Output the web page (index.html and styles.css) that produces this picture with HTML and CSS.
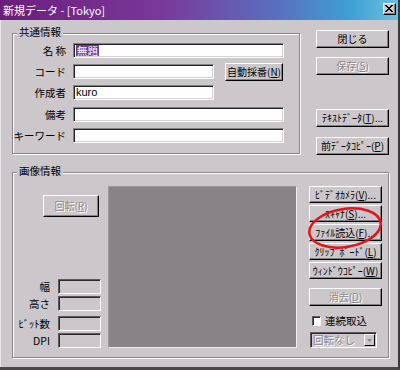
FILE: index.html
```html
<!DOCTYPE html>
<html>
    <head>
        <title>新規データ</title>
        <link rel="stylesheet" href="styles.css">
    </head>
    <body>
        <div class="window">
            <div class="titlebar">
                <span class="title">新規データ - [Tokyo]</span>
                <button class="close">
                    <svg width="9" height="8" viewBox="0 0 9 8">
                        <path d="M1 0 L8 7 M0 0 L7 7 M8 0 L1 7 M7 0 L0 7" stroke="#000" stroke-width="1"/>
                    </svg>
                </button>
            </div>
            <div class="top">
                <div class="group group-common">
                    <div class="group-title">共通情報</div>
                    <div class="rows">
                        <div class="row">
                            <span class="lbl">名 称</span>
                            <div class="field wide"><span class="sel">無題</span></div>
                        </div>
                        <div class="row">
                            <span class="lbl">コード</span>
                            <div class="field narrow"></div>
                            <button class="btn btn-auto">自動採番(<u>N</u>)</button>
                        </div>
                        <div class="row">
                            <span class="lbl">作成者</span>
                            <div class="field narrow">kuro</div>
                        </div>
                        <div class="row row-more">
                            <span class="lbl">備考</span>
                            <div class="field wide"></div>
                        </div>
                        <div class="row">
                            <span class="lbl">キーワード</span>
                            <div class="field wide"></div>
                        </div>
                    </div>
                </div>
                <div class="side">
                    <button class="btn side-btn">閉じる</button>
                    <button class="btn side-btn disabled">保存(<u>S</u>)</button>
                    <button class="btn side-btn side-far">ﾃｷｽﾄﾃﾞｰﾀ(<u>T</u>)...</button>
                    <button class="btn side-btn">前ﾃﾞｰﾀｺﾋﾟｰ(<u>P</u>)</button>
                </div>
            </div>
            <div class="group group-image">
                <div class="group-title">画像情報</div>
                <div class="image-body">
                    <div class="image-left">
                        <button class="btn disabled rotate">回転(<u>R</u>)</button>
                        <div class="specs">
                            <div class="spec"><span class="spec-lbl">幅</span><div class="box"></div></div>
                            <div class="spec"><span class="spec-lbl">高さ</span><div class="box"></div></div>
                            <div class="spec spec-far"><span class="spec-lbl">ﾋﾞｯﾄ数</span><div class="box"></div></div>
                            <div class="spec"><span class="spec-lbl">DPI</span><div class="box"></div></div>
                        </div>
                    </div>
                    <div class="preview"></div>
                    <div class="capture">
                        <button class="btn cap-btn">ﾋﾞﾃﾞｵｶﾒﾗ(<u>V</u>)...</button>
                        <button class="btn cap-btn">ｽｷｬﾅ(<u>S</u>)...</button>
                        <button class="btn cap-btn">ﾌｧｲﾙ読込(<u>F</u>)...</button>
                        <button class="btn cap-btn">ｸﾘｯﾌﾟﾎﾞｰﾄﾞ(<u>L</u>)</button>
                        <button class="btn cap-btn">ｳｨﾝﾄﾞｳｺﾋﾟｰ(<u>W</u>)</button>
                        <button class="btn cap-btn erase disabled">消去(<u>D</u>)</button>
                        <div class="check-row">
                            <span class="check"></span>
                            <span>連続取込</span>
                        </div>
                        <div class="select">
                            <span class="select-text">回転なし</span>
                            <span class="select-arrow">
                                <svg width="5" height="3" viewBox="0 0 5 3"><path d="M0 0 H5 L2.5 3 Z" fill="#8c888c"/></svg>
                            </span>
                        </div>
                        <svg class="mark" width="78" height="52" viewBox="0 0 78 52">
                            <ellipse cx="38" cy="25" rx="36" ry="19" transform="rotate(-9 38 25)" fill="none" stroke="#e4141c" stroke-width="2.5"/>
                        </svg>
                    </div>
                </div>
            </div>
        </div>
    </body>
</html>
```

FILE: styles.css
```css
body{
    margin: 0;
    font-family: "Noto Sans CJK JP", "Noto Sans", sans-serif;
    font-size: 10.5px;
    color: #000;
}
.window{
    width: 400px;
    height: 370px;
    box-sizing: border-box;
    background-color: #cbc7cb;
    border-right: 2px solid #3c383c;
    border-bottom: 3px solid #4a464a;
    box-shadow: inset 1px 0 0 #e8e4e8;
}
.titlebar{
    height: 20px;
    display: flex;
    align-items: center;
    justify-content: space-between;
    padding: 0 2px 0 3px;
    background: linear-gradient(to right, #6a1e7c, #7a3898 40%, #5a70c0 70%, #3ea0d4 88%, #6cc0e0);
}
.title{
    color: #fff;
    font-size: 11px;
    line-height: 14px;
}
.close{
    width: 13px;
    height: 12px;
    margin-top: -2px;
    padding: 0;
    display: flex;
    align-items: center;
    justify-content: center;
    background-color: #cbc7cb;
    border: 1px solid;
    border-color: #fff #000 #000 #fff;
    box-shadow: inset -1px -1px 0 #808080;
}
.top{
    height: 152px;
    display: flex;
    align-items: flex-start;
    padding-left: 12px;
}
.group{
    box-sizing: border-box;
    border: 1px solid #888488;
    box-shadow: inset 1px 1px 0 #fff, 1px 1px 0 #fff;
}
.group-title{
    width: fit-content;
    margin: -9px 0 -5px 4px;
    padding: 0 2px;
    line-height: 14px;
    background-color: #cbc7cb;
}
.group-common{
    margin-top: 13px;
    width: 288px;
    height: 121px;
}
.rows{
    padding-top: 9px;
    display: flex;
    flex-direction: column;
    row-gap: 6px;
}
.row{
    height: 15px;
    display: flex;
    align-items: center;
}
.row-more{
    margin-top: 1px;
}
.lbl{
    width: 53px;
    margin-right: 7px;
    text-align: right;
    line-height: 14px;
    white-space: pre;
}
.field{
    height: 15px;
    box-sizing: border-box;
    background-color: #fff;
    border: 1px solid;
    border-color: #848084 #fff #fff #848084;
    box-shadow: inset 1px 1px 0 #222, inset -1px -1px 0 #d4d0d4;
    padding: 0 2px;
    line-height: 12px;
    font-family: "Liberation Sans", "Noto Sans CJK JP", sans-serif;
    font-size: 11px;
}
.wide{
    width: 211px;
}
.narrow{
    width: 141px;
}
.sel{
    display: inline-block;
    margin-top: 1px;
    padding: 0 1px;
    background-color: #7a3a9a;
    color: #fff;
    font-family: "Noto Sans CJK JP", sans-serif;
    font-size: 10.5px;
    line-height: 11px;
}
.btn{
    padding: 0;
    box-sizing: border-box;
    font-family: "Noto Sans CJK JP", sans-serif;
    font-size: 10px;
    line-height: 12px;
    color: #000;
    background-color: #cbc7cb;
    border: 1px solid;
    border-color: #fff #000 #000 #fff;
    box-shadow: inset -1px -1px 0 #808080;
    white-space: nowrap;
    cursor: pointer;
}
.btn u{
    text-underline-offset: 1px;
}
.disabled{
    color: #8c888c;
    text-shadow: 1px 1px 0 #fff;
}
.btn-auto{
    margin-left: 11px;
    width: 58px;
    height: 18px;
    flex-shrink: 0;
}
.side{
    margin: 10px 0 0 16px;
    width: 73px;
    display: flex;
    flex-direction: column;
}
.side-btn{
    height: 18px;
    margin-bottom: 9px;
}
.side-far{
    margin-top: 25px;
    margin-bottom: 10px;
}
.group-image{
    margin-left: 12px;
    width: 377px;
    height: 186px;
}
.image-body{
    padding-top: 13px;
    display: flex;
}
.image-left{
    width: 95px;
    height: 162px;
    display: flex;
    flex-direction: column;
    justify-content: space-between;
}
.rotate{
    margin: 9px 0 0 30px;
    width: 56px;
    height: 22px;
}
.specs{
    display: flex;
    flex-direction: column;
    row-gap: 2px;
}
.spec{
    height: 15px;
    display: flex;
    align-items: center;
}
.spec-far{
    margin-top: 3px;
}
.spec-lbl{
    width: 37px;
    margin-right: 8px;
    text-align: right;
    line-height: 14px;
}
.box{
    width: 43px;
    height: 15px;
    box-sizing: border-box;
    border: 1px solid;
    border-color: #5c585c #fff #fff #5c585c;
    box-shadow: inset 1px 1px 0 #2c282c;
}
.preview{
    width: 189px;
    height: 162px;
    box-sizing: border-box;
    background-color: #878387;
    border: 1px solid;
    border-color: #9a969a #f0ecf0 #f0ecf0 #9a969a;
}
.capture{
    position: relative;
    margin-left: 12px;
    width: 73px;
    display: flex;
    flex-direction: column;
}
.cap-btn{
    height: 17px;
    margin-bottom: 2px;
}
.erase{
    margin-top: 7px;
    height: 18px;
}
.check-row{
    margin-top: 7px;
    height: 12px;
    display: flex;
    align-items: center;
    column-gap: 4px;
    padding-left: 3px;
    line-height: 12px;
}
.check{
    width: 9px;
    height: 10px;
    box-sizing: border-box;
    background-color: #fff;
    border: 1px solid;
    border-color: #5c585c #fff #fff #5c585c;
    box-shadow: inset 1px 1px 0 #2c282c;
}
.select{
    margin: 5px 0 0 1px;
    width: 67px;
    height: 16px;
    box-sizing: border-box;
    display: flex;
    align-items: center;
    justify-content: space-between;
    border: 1px solid;
    border-color: #5c585c #fff #fff #5c585c;
    box-shadow: inset 1px 1px 0 #2c282c;
}
.select-text{
    padding-left: 2px;
    color: #8c888c;
    text-shadow: 1px 1px 0 #fff;
    line-height: 12px;
}
.select-arrow{
    width: 11px;
    height: 12px;
    box-sizing: border-box;
    margin-right: 1px;
    display: flex;
    align-items: center;
    justify-content: center;
    border: 1px solid;
    border-color: #fff #000 #000 #fff;
}
.mark{
    position: absolute;
    left: -2px;
    top: 17px;
}
```
